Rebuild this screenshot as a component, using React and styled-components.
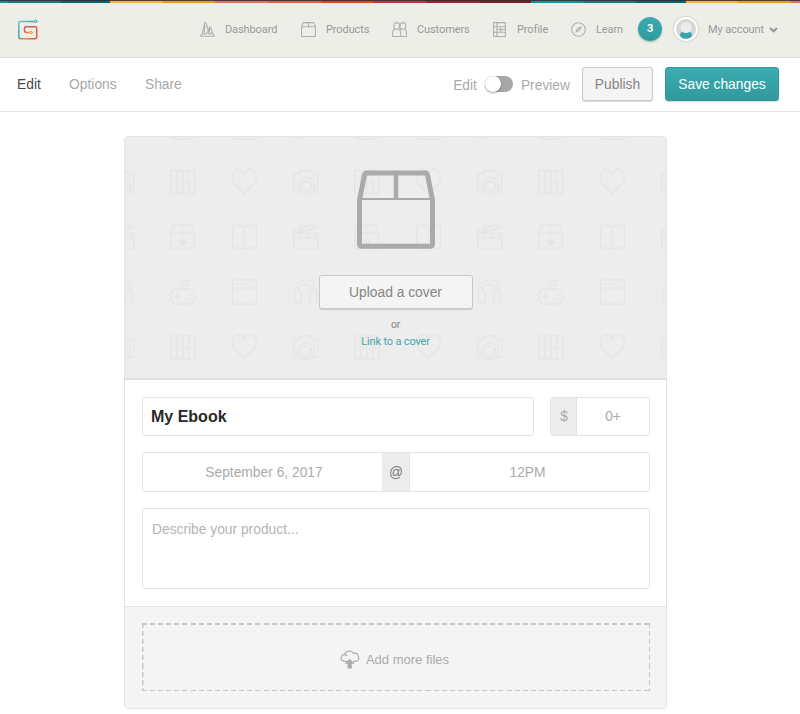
import React from "react";
import styled, { createGlobalStyle } from "styled-components";

const GlobalStyle = createGlobalStyle`
  * { box-sizing: border-box; }
  body {
    margin: 0;
    background: #fff;
    font-family: "Liberation Sans", Arial, sans-serif;
    font-size: 13.8px;
    color: #aaa;
  }
  button, input, textarea { font-family: inherit; margin: 0; }
`;

const Page = styled.div`
  height: 714px;
  overflow: hidden;
`;

const Stripe = styled.div`
  height: 3px;
  background:
    linear-gradient(rgba(50, 45, 48, 0.85) 0 1px, transparent 1px),
    linear-gradient(90deg,
      #009799 0 8px, #16797f 8px 61px, #006871 61px 110px,
      #f8b133 110px 163px, #f59a05 163px 215px,
      #ef6a5c 215px 268px, #f15843 268px 321px, #f53d14 321px 373px,
      #d42a44 373px 426px, #b01b2b 426px 479px, #901a1b 479px 531px,
      #009799 531px 584px, #16797f 584px 636px, #006871 636px 686px,
      #f8b133 686px 738px, #f59a05 738px 791px, #ef6a5c 791px);
`;

const Header = styled.header`
  height: 55px;
  display: flex;
  align-items: center;
  padding: 0 22px 2px 18px;
  background: #edeee8;
  border-bottom: 1px solid #e0e1dc;
`;

const Nav = styled.nav`
  display: flex;
  align-items: center;
  margin-left: auto;
  font-family: Roboto, sans-serif;
  font-size: 11px;
  font-weight: 400;
  letter-spacing: -0.1px;
  color: #999996;
`;

const NavItem = styled.a`
  display: flex;
  align-items: center;
  gap: 10px;
  width: ${(p) => p.$width}px;
  white-space: nowrap;
  svg { flex: none; margin-top: 1px; }
`;

const Count = styled.span`
  width: 24px;
  height: 24px;
  margin-right: 12px;
  border-radius: 50%;
  display: grid;
  place-items: center;
  padding-bottom: 1px;
  color: #fff;
  font-weight: 700;
  background: linear-gradient(#3aabb0, #319b9f);
  box-shadow: 0 1px 2px rgba(0, 0, 0, 0.25);
`;

const Avatar = styled.span`
  width: 24px;
  height: 24px;
  margin-right: 10px;
  border-radius: 50%;
  overflow: hidden;
  border: 2px solid #fff;
  box-shadow: 0 0 2px rgba(0, 0, 0, 0.35);
  svg { display: block; }
`;

const Account = styled.a`
  display: flex;
  align-items: center;
  justify-content: space-between;
  width: 70px;
  white-space: nowrap;
  svg { margin-top: 2px; }
`;

const Toolbar = styled.div`
  height: 54px;
  display: flex;
  align-items: center;
  padding: 0 21px 1px 17px;
  border-bottom: 1px solid #e4e4e4;
`;

const Tab = styled.a`
  margin-right: 28.3px;
  color: ${(p) => (p.$active ? "#484848" : "#a8a8a8")};
`;

const Actions = styled.div`
  margin-left: auto;
  display: flex;
  align-items: center;
`;

const ModeLabel = styled.span`
  padding-top: 2px;
`;

const Switch = styled.span`
  width: 28px;
  height: 16px;
  margin: 0 8px;
  border-radius: 8px;
  background: #a7a7a7;
`;

const Knob = styled.span`
  display: block;
  width: 16px;
  height: 16px;
  border-radius: 50%;
  background: #fff;
  box-shadow: 0 1px 2px rgba(0, 0, 0, 0.35);
`;

const Button = styled.button`
  width: ${(p) => p.$width}px;
  height: 34px;
  padding: 0;
  font-size: 13.8px;
  border-radius: 3px;
  color: ${(p) => (p.$primary ? "#fff" : "#858582")};
  border: 1px solid ${(p) => (p.$primary ? "#31989c" : "#c9c9c9")};
  background: ${(p) => (p.$primary ? "linear-gradient(#3aacb1, #32999d)" : "#f4f4f4")};
  box-shadow: 0 1px 1px rgba(0, 0, 0, 0.15);
`;

const ToolbarButton = styled(Button)`
  margin-left: 12px;
`;

const Card = styled.main`
  width: 543px;
  height: 573px;
  margin: 24px 0 0 124px;
  border: 1px solid #e4e4e4;
  border-radius: 4px;
  overflow: hidden;
`;

const Cover = styled.section`
  position: relative;
  height: 243px;
  display: flex;
  flex-direction: column;
  align-items: center;
  padding-top: 33px;
  background: #ededed;
  border-bottom: 2px solid #dedede;
`;

const CoverPattern = styled.svg`
  position: absolute;
  inset: 0;
`;

const CoverContent = styled.div`
  position: relative;
  display: flex;
  flex-direction: column;
  align-items: center;
`;

const BoxIcon = styled.svg`
  display: block;
  margin-bottom: 25px;
`;

const CoverNote = styled.span`
  margin-top: 10px;
  font-family: Roboto, sans-serif;
  font-size: 10.5px;
  line-height: 12px;
  letter-spacing: -0.15px;
  color: #858582;
`;

const CoverLink = styled.a`
  margin-top: 4px;
  font-family: Roboto, sans-serif;
  font-size: 11px;
  line-height: 14px;
  letter-spacing: -0.16px;
  color: #45a6aa;
`;

const Form = styled.section`
  height: 226px;
  padding: 17px 16px 0 17px;
`;

const FieldRow = styled.div`
  display: flex;
  gap: 16px;
  margin-bottom: 16px;
`;

const Field = styled.div`
  display: flex;
  flex: ${(p) => (p.$width ? `0 0 ${p.$width}px` : "1")};
  height: ${(p) => p.$height || 39}px;
  border: 1px solid #e4e4e4;
  border-radius: 3px;
  overflow: hidden;
`;

const Input = styled.input`
  flex: 1;
  min-width: 0;
  border: 0;
  padding: 0 8px;
  outline: none;
  background: #fff;
  font-size: ${(p) => (p.$title ? 16 : 13.8)}px;
  font-weight: ${(p) => (p.$title ? 700 : 400)};
  color: ${(p) => (p.$title ? "#282828" : "#aaa")};
  text-align: ${(p) => (p.$title ? "left" : "center")};
`;

const DateInput = styled(Input)`
  flex: 0 0 239px;
  padding: 0 8px 0 11px;
`;

const TimeInput = styled(Input)`
  padding: 0 12px 0 8px;
`;

const Addon = styled.span`
  width: ${(p) => p.$width}px;
  flex: none;
  display: grid;
  place-items: center;
  padding-left: 1px;
  background: #ececec;
  border-right: 1px solid #e4e4e4;
  color: ${(p) => (p.$dark ? "#777" : "#aaa")};
`;

const Description = styled.textarea`
  display: block;
  width: 100%;
  height: 81px;
  padding: 13px 9px;
  border: 1px solid #e4e4e4;
  border-radius: 3px;
  resize: none;
  outline: none;
  font-size: 13.8px;
  &::placeholder { color: #b4b4b4; }
`;

const Files = styled.section`
  height: 102px;
  padding: 16px 16px 17px 17px;
  background: #f4f4f4;
  border-top: 1px solid #e2e2e2;
`;

const DASH = "#c8c8c8 0 5px, transparent 5px 8.1px";

const DropZone = styled.div`
  height: 68px;
  display: flex;
  align-items: center;
  justify-content: center;
  gap: 6px;
  padding: 4px 3px 0 0;
  font-size: 13px;
  background:
    repeating-linear-gradient(90deg, ${DASH}) 0 0 / 100% 2px no-repeat,
    repeating-linear-gradient(90deg, ${DASH}) 0 100% / 100% 1.5px no-repeat,
    repeating-linear-gradient(180deg, ${DASH}) 0 0 / 1.5px 100% no-repeat,
    repeating-linear-gradient(180deg, ${DASH}) 100% 0 / 1.5px 100% no-repeat;
`;

const Logo = () => (
  <svg width="20" height="21" viewBox="0 0 20 21" fill="none" strokeWidth="1.5" strokeLinecap="round">
    <defs>
      <linearGradient id="outer" x1="0" y1="0" x2="1" y2="1">
        <stop offset="0" stopColor="#65c7c6" />
        <stop offset=".5" stopColor="#3d9d9e" />
        <stop offset=".65" stopColor="#ef8b4c" />
        <stop offset="1" stopColor="#e9503f" />
      </linearGradient>
    </defs>
    <path d="M16 2.500H2.300C1.300 2.500.8 3 .8 4v14c0 1 .6 1.700 1.700 1.700h14.300c1.100 0 1.900-.7 1.900-1.700v-5" stroke="url(#outer)" />
    <path d="M18.700 13V9.400c0-1-.7-1.600-1.600-1.600H8.200c-1.100 0-1.700.5-1.700 1.500v2.500c0 1.100.6 1.700 1.600 1.700" stroke="#d95a4d" />
    <path d="M8.100 13.500h3.300" stroke="#f08437" />
    <circle cx="13" cy="13.500" r="1.300" stroke="#f49a3c" strokeWidth="1" />
    <circle cx="17.700" cy="2.300" r="1.300" stroke="#4a9cc2" strokeWidth="1" />
  </svg>
);

const NAV_ART = {
  Dashboard: (
    <path d="M.6 14.300h13.800c0-1-.6-1.600-1.500-2L10.700 5H9.500L8 9.200M.6 14.300c0-1 .6-1.600 1.500-2L4.700.8H6l3.300 11.600M5 3.500 4 12.300c2 .3 3.200-1.200 4-3.100M9.900 6.500l-.8 5.800c1.300.2 2-.6 2.600-1.800" />
  ),
  Products: <path d="M2.100.6h10.800l1.500 4.100v9.700H.6V4.700zM.6 4.700h13.800M7.500.6v4.100" />,
  Customers: (
    <>
      <ellipse cx="4.700" cy="3.900" rx="2.900" ry="3.300" />
      <ellipse cx="10.900" cy="3.900" rx="2.900" ry="3.300" />
      <path d="M3 6.700C1.300 7.500.6 8.800.6 10.700v3.700h14v-3.700c0-1.900-.7-3.200-2.400-4M6.200 6.700c1.700.8 2.500 2.100 2.500 4v3.700M9.500 6.800 7.800 8.500" />
    </>
  ),
  Profile: <path d="M1.600.6h11.800v13.800H1.600zM1.600 4.700h11.800M1.600 10.300h11.800M5 .6v13.800M8.700 4.700v5.600M5 7.500h8.400" />,
  Learn: (
    <>
      <circle cx="7.500" cy="7.500" r="6.800" />
      <path d="M11 4 8.800 8.600 4 11l2.300-4.700z" fill="#aaa" stroke="none" />
      <circle cx="7.500" cy="7.500" r=".7" fill="#edeee8" stroke="none" />
    </>
  ),
};

const NavIcon = ({ name }) => (
  <svg width="15" height="15" viewBox="0 0 15 15" fill="none" stroke="#aeaeab" strokeWidth="1.05" strokeLinejoin="round">
    {NAV_ART[name]}
  </svg>
);

const NAV = [
  { name: "Dashboard", width: 101 },
  { name: "Products", width: 91 },
  { name: "Customers", width: 100 },
  { name: "Profile", width: 79 },
  { name: "Learn", width: 67 },
];

/* Each glyph is drawn in a 25 by 25 cell; the tile repeats every 184 by 165.3. */
const FENCE = "M.7 24.500V4a3 3 0 0 1 6 0v20.500M6.700 4a3 3 0 0 1 6 0v20.500M12.700 4a3 3 0 0 1 6 0v20.500M18.700 4a3 3 0 0 1 6 0v20.500H.7M3.700 12.500v3.500M9.700 12.500v3.500M15.700 12.500v3.500M21.700 12.500v3.500";
const HEART = "M12.500 24.500 2.800 14.500C-1.600 9.500.8.7 6.700.7c2.900 0 4.700 1.600 5.800 3.800C13.600 2.300 15.400.7 18.300.7c5.900 0 8.300 8.800 3.900 13.800z";
const CAMERA = "M5.500 23H.7V5H6l1.500-3.500h10L19 5h5.500v18h-5M13 8.500a8.500 8.500 0 1 0 .1 0M13 12a5.300 5.300 0 1 0 .1 0M20 8h1.500";
const PARCEL = "M3.500 1h18L24.500 9v15.500H.7V9zM.7 9h23.800M12.500 1v8M12.500 13v8M9 17.500l3.500 4 3.500-4z";
const BOOK = "M.7 2c5-1.500 9-1 11.800 1 2.800-2 7-2.500 12-1v22H16l-3.500 1L9 24H.7zM12.500 3v22";
const CLAPPER = "M.7 9h24v15.500H.7zM.7 14h24M.7 9V5L24-.5 25 4 .7 9M6 4l4 3.500M12 2.500 16 6M18 1l4 3.500M6 14l3-5M13 14l3-5M20 14l3-5";
const GAMEPAD = "M12.500 10V6h6V2H10V0M7 10h11c9 0 9 15 0 15H7c-9 0-9-15 0-15zM4 17.500h6M7 14.500v6M15 20h3M19 16h3";
const BROWSER = "M3 .7h19a2 2 0 0 1 2.500 2V25H.7V3A2 2 0 0 1 3 .7zM.7 9h23.800M4 5h2M8 5h2M12 5h2";
const HEADPHONES = "M8 12v12.500H5.500C2.500 24 1 21 1 17.500L3 8C5-1.500 20-1.500 22 8l2 9.500c0 3.500-1.500 6.500-4.500 7H17V12h3C20 3 5 3 5 12z";

const GOODS = [
  [45, 32, FENCE], [107, 32, HEART], [168, 32, CAMERA], [-16, 32, CAMERA],
  [45, 87, PARCEL], [107, 87, BOOK], [168, 87, CLAPPER], [-16, 87, CLAPPER],
  [45, 142, GAMEPAD], [107, 142, BROWSER], [168, 142, HEADPHONES], [-16, 142, HEADPHONES],
  [45, -23, GAMEPAD], [107, -23, BROWSER], [168, -23, HEADPHONES],
];

const Pattern = () => (
  <CoverPattern width="541" height="241" aria-hidden="true">
    <defs>
      <pattern id="goods" width="184" height="165.3" patternUnits="userSpaceOnUse">
        <g fill="none" stroke="#e5e5e5" strokeWidth="1.5" strokeLinejoin="round">
          {GOODS.map(([x, y, d]) => (
            <path key={`${x},${y}`} transform={`translate(${x} ${y})`} d={d} />
          ))}
        </g>
      </pattern>
    </defs>
    <rect width="541" height="241" fill="url(#goods)" />
  </CoverPattern>
);

const CloudIcon = () => (
  <svg width="20" height="19" viewBox="0 0 20 19" fill="none" stroke="#aaa">
    <path d="M7 11.300H4.800C-.3 11-.2 4.500 4.600 4.600 5.500.1 12 .1 13.300 3.200c3.200-.5 5 1 5 3.400 1.500 2.200 0 4.700-3 4.700h-2M4.600 4.600c1.200 0 2 .4 2.600 1" strokeWidth="1.200" />
    <path d="m9.700 8.800 5.100 5h-3v4.700H7.600v-4.700h-3z" fill="#aaa" stroke="none" />
  </svg>
);

export default function App() {
  return (
    <Page>
      <GlobalStyle />
      <Stripe />
      <Header>
        <Logo />
        <Nav>
          {NAV.map((n) => (
            <NavItem key={n.name} $width={n.width}>
              <NavIcon name={n.name} />
              {n.name}
            </NavItem>
          ))}
          <Count>3</Count>
          <Avatar>
            <svg width="20" height="20" viewBox="0 0 20 20">
              <rect width="20" height="20" fill="#d7d7d7" />
              <ellipse cx="10" cy="16" rx="6" ry="4" fill="#37a5a9" />
              <circle cx="10" cy="8.5" r="5.500" fill="#ececec" />
            </svg>
          </Avatar>
          <Account>
            My account
            <svg width="9" height="6" viewBox="0 0 9 6" fill="none" stroke="#979794" strokeWidth="2">
              <path d="m1 1 3.500 3.300L8 1" />
            </svg>
          </Account>
        </Nav>
      </Header>
      <Toolbar>
        <Tab $active>Edit</Tab>
        <Tab>Options</Tab>
        <Tab>Share</Tab>
        <Actions>
          <ModeLabel>Edit</ModeLabel>
          <Switch><Knob /></Switch>
          <ModeLabel>Preview</ModeLabel>
          <ToolbarButton $width={71}>Publish</ToolbarButton>
          <ToolbarButton $width={114} $primary>Save changes</ToolbarButton>
        </Actions>
      </Toolbar>
      <Card>
        <Cover>
          <Pattern />
          <CoverContent>
            <BoxIcon width="80" height="80" viewBox="0 0 80 80" fill="none" stroke="#aaa" strokeLinejoin="round">
              <path d="M10.500 3h59q1.500 0 2 2l5 25v44q0 2.300-2.300 2.300H5.800Q3.500 76.300 3.500 74V30l5-25q.5-2 2-2z" strokeWidth="5" />
              <path d="M40 3v26" strokeWidth="4.500" />
              <path d="M3.500 29h73" strokeWidth="2" />
            </BoxIcon>
            <Button $width={154}>Upload a cover</Button>
            <CoverNote>or</CoverNote>
            <CoverLink>Link to a cover</CoverLink>
          </CoverContent>
        </Cover>
        <Form>
          <FieldRow>
            <Field><Input $title defaultValue="My Ebook" /></Field>
            <Field $width={100}>
              <Addon $width={26}>$</Addon>
              <Input defaultValue="0+" />
            </Field>
          </FieldRow>
          <FieldRow>
            <Field $height={40}>
              <DateInput defaultValue="September 6, 2017" />
              <Addon $width={28} $dark>@</Addon>
              <TimeInput defaultValue="12PM" />
            </Field>
          </FieldRow>
          <Description placeholder="Describe your product..." />
        </Form>
        <Files>
          <DropZone>
            <CloudIcon />
            Add more files
          </DropZone>
        </Files>
      </Card>
    </Page>
  );
}
